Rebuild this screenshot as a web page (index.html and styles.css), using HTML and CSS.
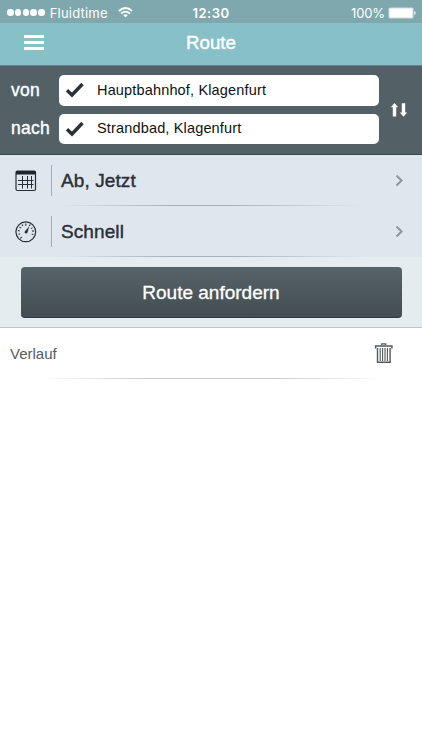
FILE: index.html
```html
<!DOCTYPE html>
<html lang="de">
<head>
<meta charset="utf-8">
<title>Route</title>
<link rel="stylesheet" href="styles.css">
</head>
<body>
<header class="status">
  <div class="carrier">
    <span class="signal"><i></i><i></i><i></i><i></i><i></i></span>
    <span class="operator">Fluidtime</span>
    <svg class="wifi" width="15" height="11" viewBox="0 0 15 11" fill="none" stroke="#fff" stroke-width="1.7"><path d="M.8 4Q7.5-2 14.2 4M3.1 6.5Q7.5 2.6 11.9 6.5"/><path d="M5.2 8.1Q7.5 6.2 9.8 8.1L7.5 10.5Z" fill="#fff" stroke="none"/></svg>
  </div>
  <time class="clock">12:30</time>
  <div class="power"><span class="percent">100%</span>
    <svg width="28" height="12" viewBox="0 0 28 12"><rect x=".5" y=".5" width="25" height="11" rx="1.5" fill="#c7dcdf"/><rect x="1.5" y="1.5" width="23" height="9" rx=".7" fill="#fff"/><path d="M26.4 4q1.2.4 1.2 2t-1.2 2Z" fill="#fff"/></svg>
  </div>
</header>
<nav class="nav">
  <span class="menu"><i></i><i></i><i></i></span>
  <h1 class="title">Route</h1>
</nav>
<section class="places">
  <div class="fields">
    <label class="label from">von</label>
    <div class="field"><svg class="check" width="20" height="16" viewBox="0 0 20 16"><path d="M2 8.2 7 13 17.5 2" fill="none" stroke="#293236" stroke-width="3.4"/></svg><span class="station">Hauptbahnhof, Klagenfurt</span></div>
    <label class="label to">nach</label>
    <div class="field"><svg class="check" width="20" height="16" viewBox="0 0 20 16"><path d="M2 8.2 7 13 17.5 2" fill="none" stroke="#293236" stroke-width="3.4"/></svg><span class="station second">Strandbad, Klagenfurt</span></div>
  </div>
  <svg class="swap" width="18" height="16" viewBox="0 0 18 16" fill="#fff"><path d="M4.5 1 8.2 5.2H6.2V14.5H2.8V5.2H.8ZM13.5 14.8 9.8 10.5H11.8V1.2H15.2V10.5H17.2Z"/></svg>
</section>
<main>
  <div class="option">
    <svg class="icon" width="22" height="22" viewBox="0 0 22 22" fill="none" stroke="#292f34"><rect x="1" y="1" width="19.5" height="19.5" rx="1.5" stroke-width="1.2"/><path d="M1 1h19.5v3.5H1Z" fill="#1f252a" stroke="none"/><path d="M7.5 6v12.5M12.5 6v12.5M16.5 6v12.5M3 10.5h15.5M3 14.5h15.5" stroke-width="1"/></svg>
    <span class="rule"></span><span class="value when">Ab, Jetzt</span>
    <svg class="chevron" width="9" height="13" viewBox="0 0 9 13"><path d="m1.5 1.5 5 5-5 5" fill="none" stroke="#8c959e" stroke-width="2"/></svg>
  </div>
  <div class="option">
    <svg class="icon" width="22" height="22" viewBox="0 0 22 22" fill="none" stroke="#292f34"><circle cx="10.8" cy="10.8" r="9.9" stroke-width="1.2"/><path d="M6.8 15.8 5.3 17.5M3.5 13.3l1.5-.4M2.8 9.5l1.8.4M4.5 6l1.5 1.1M7 3.4l.8 1.6M10.8 2.6v2.2M15.2 3.4l-.9 1.6M17.5 6.6l-1.4 1M19 9.9l-1.8.2M18.3 13.6l-1.6-.5" stroke-width="1.1"/><path d="M14.2 5.3 12.5 11.6q-1 1.4-2.2.7t-.5-1.8Z" fill="#292f34" stroke="none"/></svg>
    <span class="rule"></span><span class="value speed">Schnell</span>
    <svg class="chevron" width="9" height="13" viewBox="0 0 9 13"><path d="m1.5 1.5 5 5-5 5" fill="none" stroke="#8c959e" stroke-width="2"/></svg>
  </div>
  <div class="action"><button class="request"><span>Route anfordern</span></button></div>
  <div class="history"><span class="history-label">Verlauf</span>
    <svg width="20" height="21" viewBox="0 0 20 21" fill="none" stroke="#54575b"><path d="M7.8 2V.9h3.8V2" stroke-width="1.4"/><path d="M1.6 5.5V3h16.3v2.5M1.6 3.1h16.3" stroke-width="1.5"/><path d="M3.5 5v14.3h12.6V5" stroke-width="1.4"/><path d="M6.2 5v13M8.6 5v13M11 5v13M13.4 5v13" stroke-width="1.1"/></svg>
  </div>
</main>
</body>
</html>
```
FILE: styles.css
```css
* { box-sizing: border-box; }
body { margin: 0; width: 422px; height: 750px; overflow: hidden; background: #fff; font-family: "Liberation Sans", Arial, sans-serif; }
.status { height: 23px; padding: 2px 6px 0 7px; display: grid; grid-template-columns: 1fr auto 1fr; align-items: center; background: #7ea8ae; color: #fff; font-family: Inter, sans-serif; font-size: 13px; }
.carrier, .power { display: flex; align-items: center; }
.power { justify-content: flex-end; gap: 3px; }
.signal { display: flex; gap: 1.2px; margin-right: 5px; }
.signal i { width: 6.6px; height: 6.6px; border-radius: 50%; background: #fff; }
.operator { letter-spacing: .2px; }
.wifi { margin-left: 10px; margin-top: -1px; }
.clock { font-weight: 600; letter-spacing: .5px; margin-right: 1px; }
.percent { letter-spacing: -.1px; }
.nav { height: 42px; display: grid; grid-template-columns: 1fr auto 1fr; align-items: center; background: #88c0c8; color: #fff; }
.menu { display: flex; flex-direction: column; gap: 3px; width: 20px; margin: -3px 0 0 24px; }
.menu i { height: 3px; background: #fff; }
.title { margin: -2px 0 0; font-size: 18.7px; line-height: 22px; font-weight: 400; -webkit-text-stroke: .4px; }
.places { height: 90px; padding-left: 11px; display: flex; align-items: center; background: #536066; border-top: 1px solid #66828a; border-bottom: 1px solid #39444a; color: #fff; }
.fields { display: grid; grid-template-columns: 48px 320px; row-gap: 8px; align-items: center; margin-top: -1px; }
.label { font-size: 17.5px; -webkit-text-stroke: .4px; letter-spacing: .3px; }
.field { height: 30.5px; background: #fff; border-radius: 5px; display: flex; align-items: center; color: #111; }
.check { margin-left: 6px; }
.station { margin: -1px 0 0 12px; font-size: 14.5px; letter-spacing: .16px; }
.swap { margin-left: 11px; }
.option { height: 51px; display: flex; align-items: center; padding: 0 18px 0 15px; background: linear-gradient(90deg, transparent 14%, #abb1bb 40%, #abb1bb 55%, transparent 86%) bottom / 100% 1px no-repeat, #e0e6ee; }
.rule { width: 1px; height: 31px; margin: 0 9px 0 14px; background: #a3abb4; }
.value { color: #293036; font-size: 19px; -webkit-text-stroke: .4px; letter-spacing: .1px; }
.chevron { margin-left: auto; }
.action { height: 71px; padding: 10px 20.5px; background: #e5ecf0; border-bottom: 1px solid #bec5c8; }
.request { display: block; width: 381px; height: 51px; padding: 2px 0 0; border: 0; border-bottom: 1px solid #30383d; border-radius: 4px; background: linear-gradient(#566369, #434d52); color: #fff; font: 19px "Liberation Sans", Arial, sans-serif; -webkit-text-stroke: .3px; }
.history { height: 51px; display: flex; align-items: center; justify-content: space-between; padding: 0 28px 0 10px; background: linear-gradient(90deg, transparent 9%, #c7c9cb 35%, #c7c9cb 65%, transparent 91%) bottom / 100% 1px no-repeat; }
.history-label { color: #565c60; font-size: 15px; }
```
